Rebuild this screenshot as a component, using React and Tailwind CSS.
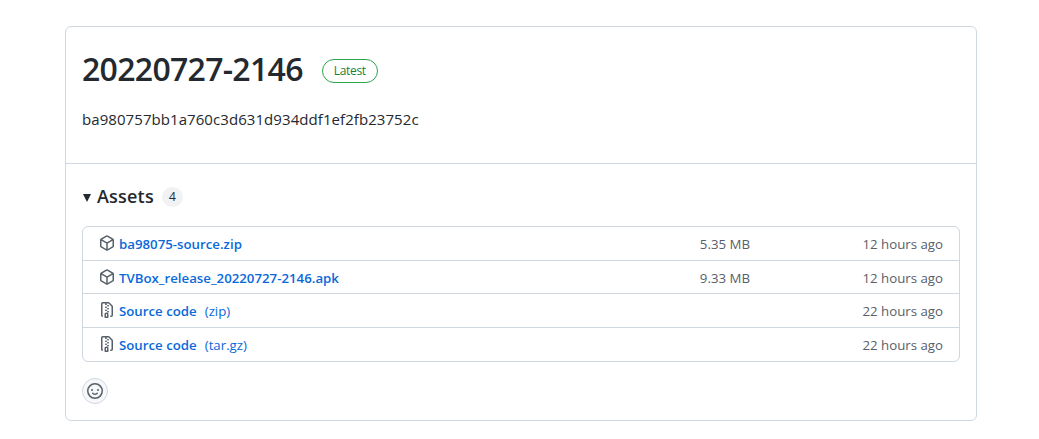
const PACKAGE_PATH =
  'm8.878.392 5.25 3.045c.54.314.872.89.872 1.514v6.098a1.75 1.75 0 0 1-.872 1.514l-5.25 3.045a1.75 1.75 0 0 1-1.756 0l-5.25-3.045A1.75 1.75 0 0 1 1 11.049V4.951c0-.624.332-1.201.872-1.514L7.122.392a1.75 1.75 0 0 1 1.756 0ZM7.875 1.69l-4.63 2.685L8 7.133l4.755-2.758-4.63-2.685a.248.248 0 0 0-.25 0ZM2.5 5.677v5.372c0 .09.047.171.125.216l4.625 2.683V8.432Zm6.25 8.271 4.625-2.683a.25.25 0 0 0 .125-.216V5.677L8.75 8.432Z';
const ZIP_PATH =
  'M3.5 1.75v11.5c0 .09.048.173.126.217a.75.75 0 0 1-.752 1.298A1.748 1.748 0 0 1 2 13.25V1.75C2 .784 2.784 0 3.75 0h5.586c.464 0 .909.185 1.237.513l2.914 2.914c.329.328.513.773.513 1.237v8.586A1.75 1.75 0 0 1 12.25 15h-.5a.75.75 0 0 1 0-1.5h.5a.25.25 0 0 0 .25-.25V4.664a.25.25 0 0 0-.073-.177L9.513 1.573a.25.25 0 0 0-.177-.073H7.25a.75.75 0 0 1 0 1.5h-.5a.75.75 0 0 1 0-1.5h-3a.25.25 0 0 0-.25.25Zm3.75 8.75h.5c.966 0 1.75.784 1.75 1.75v3a.75.75 0 0 1-.75.75h-2.5a.75.75 0 0 1-.75-.75v-3c0-.966.784-1.75 1.75-1.75ZM6 5.25a.75.75 0 0 1 .75-.75h.5a.75.75 0 0 1 0 1.5h-.5A.75.75 0 0 1 6 5.25Zm.75 2.25h.5a.75.75 0 0 1 0 1.5h-.5a.75.75 0 0 1 0-1.5ZM8 6.75A.75.75 0 0 1 8.75 6h.5a.75.75 0 0 1 0 1.5h-.5A.75.75 0 0 1 8 6.75ZM8.75 3h.5a.75.75 0 0 1 0 1.5h-.5a.75.75 0 0 1 0-1.5ZM8 9.75A.75.75 0 0 1 8.75 9h.5a.75.75 0 0 1 0 1.5h-.5A.75.75 0 0 1 8 9.75Zm-1 2.5v2.25h1v-2.25a.25.25 0 0 0-.25-.25h-.5a.25.25 0 0 0-.25.25Z';
const SMILEY_PATH =
  'M8 0a8 8 0 1 1 0 16A8 8 0 0 1 8 0ZM1.5 8a6.5 6.5 0 1 0 13 0 6.5 6.5 0 0 0-13 0Zm3.82 1.636a.75.75 0 0 1 1.038.175l.007.009c.103.118.22.222.35.31.264.178.683.37 1.285.37.602 0 1.02-.192 1.285-.371.13-.088.247-.192.35-.31l.007-.008a.75.75 0 0 1 1.222.87l-.022-.015c.02.013.021.015.021.015v.001l-.001.002-.002.003-.005.007-.014.019a2.066 2.066 0 0 1-.184.213c-.16.166-.338.316-.53.445-.63.418-1.37.638-2.127.629-.946 0-1.652-.308-2.126-.63a3.331 3.331 0 0 1-.715-.657l-.014-.02-.005-.006-.002-.003v-.002h-.001l.613-.432-.614.43a.75.75 0 0 1 .183-1.044ZM12 7a1 1 0 1 1-2 0 1 1 0 0 1 2 0ZM5 8a1 1 0 1 1 0-2 1 1 0 0 1 0 2Zm5.25 2.25.592.416a97.71 97.71 0 0 0-.592-.416Z';

const ASSETS = [
  { name: 'ba98075-source.zip', icon: PACKAGE_PATH, size: '5.35 MB', age: '12 hours ago', rowClass: 'h-[33px]' },
  { name: 'TVBox_release_20220727-2146.apk', icon: PACKAGE_PATH, size: '9.33 MB', age: '12 hours ago', rowClass: 'h-[33px] pt-[2px] border-t border-[#d0d7de]' },
  { name: 'Source code', ext: '(zip)', icon: ZIP_PATH, age: '22 hours ago', rowClass: 'h-[34px] border-t border-[#d0d7de]' },
  { name: 'Source code', ext: '(tar.gz)', icon: ZIP_PATH, age: '22 hours ago', rowClass: 'h-[34px] border-t border-[#d0d7de]' },
];

function Octicon({ d, className }) {
  return (
    <svg viewBox="0 0 16 16" width="16" height="16" fill="currentColor" className={className}>
      <path d={d} />
    </svg>
  );
}

export default function App() {
  return (
    <div className="h-[439px] bg-white pt-[26px] pl-[65px] font-['Open_Sans','Noto_Sans',sans-serif] text-[#24292f]">
      <div className="w-[912px] h-[395px] rounded-md border border-[#d0d7de]">
        {/* Release header */}
        <div className="h-[137px] border-b border-[#d0d7de] px-4 pt-[19px]">
          <div className="flex items-center">
            <h1 className="text-[32px] leading-[45px] font-semibold tracking-[-0.7px]">20220727-2146</h1>
            <span className="ml-[19px] mt-[5px] flex h-6 w-[56px] items-center justify-center rounded-full border border-[#2da44e] text-[12px] text-[#1a7f37] tracking-[-0.3px]">
              Latest
            </span>
          </div>
          <p className="mt-[18px] text-[15px] leading-[21px] tracking-[0.07px]">ba980757bb1a760c3d631d934ddf1ef2fb23752c</p>
        </div>

        <div className="px-4 pt-[19px]">
          {/* Assets heading */}
          <div className="flex h-[27px] items-center">
            <span className="ml-px mt-[3px] h-0 w-0 border-x-[4.5px] border-t-[8px] border-x-transparent border-t-[#24292f]" />
            <span className="ml-[6px] text-[18px] font-semibold tracking-[0.2px]">Assets</span>
            <span className="ml-2 flex h-5 w-[21px] items-center justify-center rounded-full bg-[#f0f2f4] text-[12px] font-medium">4</span>
          </div>

          {/* Asset list */}
          <ul className="mt-[16px] w-[878px] rounded-md border border-[#d0d7de]">
            {ASSETS.map((asset, i) => (
              <li key={i} className={`flex items-center px-4 ${asset.rowClass}`}>
                <Octicon d={asset.icon} className="mb-[2px] shrink-0 text-[#57606a]" />
                <a className="ml-1 mt-[2px] text-[13.25px] font-semibold text-[#0969da]">{asset.name}</a>
                {asset.ext && <span className="ml-2 mt-[2px] text-[13.25px] text-[#0969da]">{asset.ext}</span>}
                <span className="ml-auto mt-[2px] w-[70px] text-right text-[13.25px] text-[#57606a]">{asset.size}</span>
                <span className="mt-[2px] w-[193px] text-right text-[13.25px] text-[#57606a]">{asset.age}</span>
              </li>
            ))}
          </ul>

          <button className="mt-4 flex h-[26px] w-[26px] items-center justify-center rounded-full border border-[#d0d7de] bg-[#f6f8fa] text-[#57606a]">
            <Octicon d={SMILEY_PATH} />
          </button>
        </div>
      </div>
    </div>
  );
}
